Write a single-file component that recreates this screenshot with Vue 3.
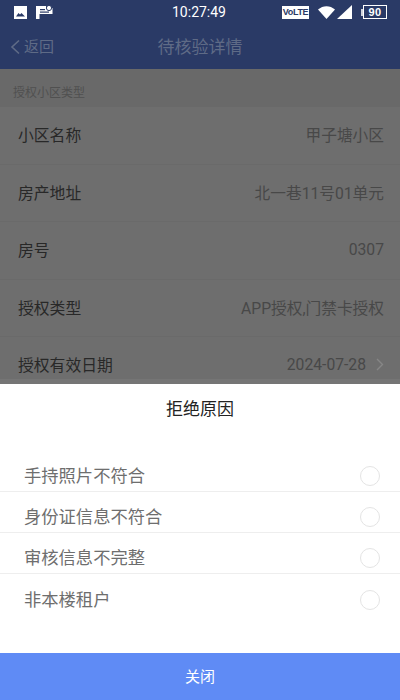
<script setup>
const rows = [
  { label: '小区名称', value: '甲子塘小区' },
  { label: '房产地址', value: '北一巷11号01单元' },
  { label: '房号', value: '0307' },
  { label: '授权类型', value: 'APP授权,门禁卡授权' },
  { label: '授权有效日期', value: '2024-07-28', arrow: true }
]
const reasons = ['手持照片不符合', '身份证信息不符合', '审核信息不完整', '非本楼租户']
</script>

<template>
  <div class="screen">
    <div class="head">
      <div class="status">
        <div class="status-left">
          <svg width="13" height="13" viewBox="0 0 13 13"><rect width="13" height="13" fill="#fff"/><path d="M2 10.500l2.500-3.500 1.500 1.500 1.500-1.500 3.500 3.500z" fill="#2a3a66"/></svg>
          <svg width="17" height="14" viewBox="0 0 17 14"><path d="M0 1h10v2h6.500v6H3.500v5H0z" fill="#fff"/><circle cx="13" cy="3" r="2.600" fill="#fff" stroke="#2a3a66"/><rect x="4" y="4" width="5" height="1.200" fill="#2a3a66"/><rect x="4" y="6.500" width="9" height="1.200" fill="#2a3a66"/></svg>
        </div>
        <span class="time">10:27:49</span>
        <div class="status-right">
          <span class="volte">VoLTE</span>
          <svg width="17" height="13" viewBox="0 0 17 13"><path d="M0 3.500C5 -1 12 -1 17 3.500L8.500 13z" fill="#fff"/></svg>
          <svg class="signal" width="15" height="14" viewBox="0 0 15 14"><path d="M15 0v14H0z" fill="#fff"/></svg>
          <span class="batt-cap"></span>
          <span class="batt">90</span>
        </div>
      </div>
      <div class="nav">
        <div class="back">
          <svg width="11" height="16" viewBox="0 0 11 16"><path d="M9 1.500L2 8l7 6.500" fill="none" stroke="#5f6b86" stroke-width="1.600"/></svg>
          <span>返回</span>
        </div>
        <span class="title">待核验详情</span>
      </div>
    </div>

    <div class="section">授权小区类型</div>
    <div class="list">
      <div v-for="r in rows" :key="r.label" class="row">
        <span class="label">{{ r.label }}</span>
        <span class="value">
          {{ r.value }}
          <svg v-if="r.arrow" class="chev" width="8" height="13" viewBox="0 0 8 13"><path d="M1 1l5.500 5.500L1 12" fill="none" stroke="#868686" stroke-width="1.400"/></svg>
        </span>
      </div>
    </div>

    <div class="sheet">
      <div class="sheet-title">拒绝原因</div>
      <div class="reasons">
        <div v-for="t in reasons" :key="t" class="reason">
          <span class="reason-text">{{ t }}</span>
          <i class="radio"></i>
        </div>
      </div>
      <div class="close">关闭</div>
    </div>
  </div>
</template>

<style scoped>
.screen {
  position: relative;
  width: 400px;
  height: 700px;
  overflow: hidden;
  background: #696969;
  font-family: Roboto, "Noto Sans CJK SC", sans-serif;
}
.head {
  height: 69px;
  background: #2a3a66;
}
.status {
  height: 24px;
  display: flex;
  align-items: center;
  justify-content: space-between;
  padding: 0 13px 0 14px;
  position: relative;
}
.status-left {
  display: flex;
  gap: 9px;
  align-items: center;
}
.time {
  position: absolute;
  left: 172px;
  top: 3px;
  font-size: 14px;
  line-height: 18px;
  color: #fff;
}
.status-right {
  display: flex;
  align-items: center;
}
.volte {
  width: 27px;
  height: 13px;
  background: #fff;
  color: #2a3a66;
  font-family: "Liberation Sans", sans-serif;
  font-size: 9px;
  font-weight: 700;
  letter-spacing: -0.3px;
  line-height: 13px;
  text-align: center;
  margin-right: 9px;
}
.signal {
  margin-left: 2px;
}
.batt-cap {
  width: 2px;
  height: 7px;
  background: #cfd3dc;
  margin-left: 9px;
}
.batt {
  width: 22px;
  height: 12px;
  border: 1px solid #fff;
  color: #fff;
  font-family: "Liberation Sans", sans-serif;
  font-size: 11px;
  font-weight: 700;
  line-height: 12px;
  text-align: center;
  letter-spacing: 0.5px;
}
.nav {
  height: 45px;
  display: flex;
  align-items: center;
  justify-content: center;
  position: relative;
}
.back {
  position: absolute;
  left: 10px;
  top: 14px;
  display: flex;
  align-items: center;
  gap: 3px;
  color: #5f6b86;
  font-size: 15px;
  line-height: 18px;
}
.title {
  color: #5f6b86;
  font-size: 17px;
  line-height: 20px;
}
.section {
  height: 38px;
  padding-left: 13px;
  font-size: 12px;
  line-height: 48px;
  color: #505050;
}
.row {
  height: 57.500px;
  padding: 0 16px 1px 18px;
  display: flex;
  align-items: center;
  justify-content: space-between;
  background: #6e6e6e;
  border-bottom: 1px solid #6a6a6a;
  box-sizing: border-box;
}
.label {
  font-size: 15.800px;
  color: #282828;
}
.value {
  font-size: 15.700px;
  color: #484848;
  display: flex;
  align-items: center;
  gap: 10px;
}
.sheet {
  position: absolute;
  left: 0;
  right: 0;
  bottom: 0;
  height: 316px;
  background: #fff;
  box-shadow: 0 -5px 0 #757575;
  display: flex;
  flex-direction: column;
}
.sheet-title {
  height: 51px;
  text-align: center;
  font-size: 17px;
  line-height: 50px;
  color: #222;
}
.reasons {
  flex: 1;
  padding-top: 16px;
}
.reason {
  height: 41px;
  box-sizing: border-box;
  display: flex;
  align-items: center;
  justify-content: space-between;
  padding: 10px 20px 0 24px;
  border-bottom: 1px solid #eee;
  font-size: 17.300px;
  color: #6e6e6e;
}
.reason:last-child {
  border-bottom: 0;
}
.reason-text {
  padding-bottom: 3px;
}
.radio {
  width: 20px;
  height: 20px;
  box-sizing: border-box;
  border: 1px solid #e4e4e4;
  border-radius: 50%;
}
.close {
  height: 47px;
  background: #5f8bf5;
  color: #fff;
  text-align: center;
  font-size: 15px;
  line-height: 49px;
}
</style>
